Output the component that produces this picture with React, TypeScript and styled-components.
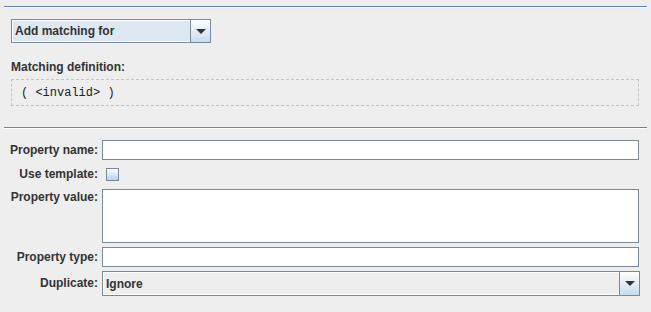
import React, { useState } from "react";
import styled, { createGlobalStyle } from "styled-components";

const GlobalStyle = createGlobalStyle`
  html, body {
    margin: 0;
    padding: 0;
    background: #eeeeee;
  }
  body {
    font-family: "Liberation Sans", Arial, sans-serif;
    font-size: 12px;
    color: #333333;
  }
`;

type Option = "Ignore" | "Replace" | "Append";

const App = () => {
  const [checked, setChecked] = useState(false);
  const [duplicate] = useState<Option>("Ignore");

  return (
    <Page>
      <GlobalStyle />
      <Separator />
      <Section>
        <Combo $tint>
          <ComboValue>Add matching for</ComboValue>
          <ArrowButton>
            <Arrow />
          </ArrowButton>
        </Combo>
        <SectionLabel>Matching definition:</SectionLabel>
        <Definition>( &lt;invalid&gt; )</Definition>
      </Section>
      <Separator $gap />
      <Form>
        <Label>Property name:</Label>
        <TextField />

        <Label>Use template:</Label>
        <CheckRow>
          <CheckBox
            $checked={checked}
            onClick={() => setChecked(!checked)}
          />
        </CheckRow>

        <Label $top>Property value:</Label>
        <TextArea />

        <Label>Property type:</Label>
        <TextField />

        <Label>Duplicate:</Label>
        <Combo $wide>
          <ComboValue>{duplicate}</ComboValue>
          <ArrowButton>
            <Arrow />
          </ArrowButton>
        </Combo>
      </Form>
    </Page>
  );
};

const Page = styled.div`
  width: 651px;
  height: 312px;
  box-sizing: border-box;
  padding-top: 6px;
  background: #eeeeee;
  overflow: hidden;
`;

const Separator = styled.div<{ $gap?: boolean }>`
  height: 1px;
  margin: ${(p) => (p.$gap ? "21px 4px 0" : "0 4px")};
  background: #6382bf;
  border-bottom: 1px solid #ffffff;
`;

const Section = styled.div`
  display: flex;
  flex-direction: column;
  align-items: flex-start;
  padding: 11px 12px 0 11px;
`;

const Combo = styled.div<{ $tint?: boolean; $wide?: boolean }>`
  display: flex;
  box-sizing: border-box;
  width: ${(p) => (p.$wide ? "538px" : "200px")};
  height: ${(p) => (p.$wide ? "25px" : "24px")};
  border: 1px solid #7a8a99;
  background: ${(p) => (p.$tint ? "#dde8f3" : "#eeeeee")};
`;

const ComboValue = styled.div`
  flex: 1;
  display: flex;
  align-items: center;
  padding-left: 2px;
  border: 1px solid #ffffff;
  border-right: none;
  font-weight: bold;
  font-size: 12px;
  color: #333333;
`;

const ArrowButton = styled.div`
  width: 19px;
  display: flex;
  align-items: center;
  justify-content: center;
  border-left: 1px solid #7a8a99;
  background: linear-gradient(#ffffff, #c9dbec);
`;

const Arrow = styled.div`
  width: 0;
  height: 0;
  border-left: 5px solid transparent;
  border-right: 5px solid transparent;
  border-top: 5px solid #333333;
`;

const SectionLabel = styled.div`
  margin-top: 17px;
  line-height: 15px;
  font-weight: bold;
  font-size: 12px;
  color: #333333;
`;

const Definition = styled.div`
  box-sizing: border-box;
  align-self: stretch;
  height: 27px;
  margin-top: 4px;
  padding-left: 9px;
  display: flex;
  align-items: center;
  border: 1px dashed #c4c4c4;
  font-family: "Liberation Mono", "Courier New", monospace;
  font-size: 12px;
  color: #222222;
`;

const Form = styled.div`
  display: grid;
  grid-template-columns: 98px 538px;
  grid-template-rows: 20px 21px 54px 20px 25px;
  column-gap: 4px;
  row-gap: 4px;
  margin-top: 11px;
`;

const Label = styled.div<{ $top?: boolean }>`
  display: flex;
  justify-content: flex-end;
  align-items: ${(p) => (p.$top ? "flex-start" : "center")};
  padding-top: ${(p) => (p.$top ? "1px" : "0")};
  font-weight: bold;
  font-size: 12px;
  line-height: 15px;
  color: #333333;
  white-space: nowrap;
`;

const TextField = styled.div`
  box-sizing: border-box;
  width: 537px;
  height: 20px;
  border: 1px solid #7a8a99;
  background: #ffffff;
`;

const TextArea = styled(TextField)`
  height: 54px;
`;

const CheckRow = styled.div`
  display: flex;
  align-items: center;
  padding-left: 4px;
`;

const CheckBox = styled.div<{ $checked: boolean }>`
  box-sizing: border-box;
  width: 13px;
  height: 13px;
  border: 1px solid #7a8a99;
  background: linear-gradient(#ffffff, #b8cfe5);
  cursor: pointer;
`;

export default App;
